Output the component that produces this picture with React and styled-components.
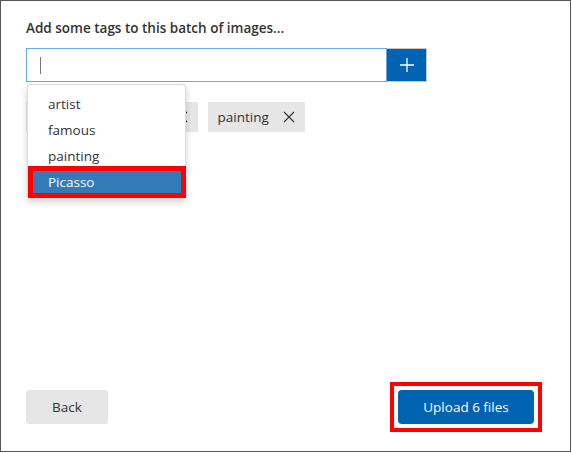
import React from 'react';
import styled, { createGlobalStyle } from 'styled-components';

const GlobalStyle = createGlobalStyle`
    html, body {
        margin: 0;
        padding: 0;
        background: #ffffff;
    }
    * {
        box-sizing: border-box;
    }
`

const Sframe = styled.div`
    width: 571px;
    height: 452px;
    border: 1px solid #555555;
    background: #ffffff;
    display: flex;
    flex-direction: column;
    padding: 17px 0 27px 25px;
    font-family: "Open Sans", "Noto Sans", sans-serif;
    color: #333333;
`

const Stitle = styled.div`
    font-size: 13.5px;
    font-weight: 600;
    line-height: 20px;
    color: #333333;
`

const SinputRow = styled.div`
    position: relative;
    display: flex;
    margin-top: 10px;
    height: 34px;
`

const SinputBox = styled.div`
    width: 361px;
    height: 34px;
    border: 1px solid #67a9e2;
    display: flex;
    align-items: center;
    padding-left: 13px;
`

const Scaret = styled.span`
    width: 1px;
    height: 17px;
    background: #777777;
`

const SplusButton = styled.button`
    width: 40px;
    height: 34px;
    border: 1px solid #c8c8c8;
    border-left: none;
    background: #0063b1;
    display: flex;
    align-items: center;
    justify-content: center;
    padding: 0;
`

const Sdropdown = styled.ul`
    position: absolute;
    top: 36px;
    left: 1px;
    width: 159px;
    margin: 0;
    padding: 6px 0 0 0;
    list-style: none;
    background: #ffffff;
    border: 1px solid #dcdcdc;
    border-radius: 3px;
    box-shadow: 0 3px 7px rgba(0, 0, 0, 0.18);
    z-index: 2;
`

const Sitem = styled.li`
    height: ${p => (p.$active ? '32px' : '26px')};
    margin: ${p => (p.$active ? '-3px -1px 0 0' : '0')};
    padding-left: ${p => (p.$active ? '15px' : '20px')};
    border: ${p => (p.$active ? '5px solid #ff0000' : 'none')};
    background: ${p => (p.$active ? '#337ab7' : 'transparent')};
    color: ${p => (p.$active ? '#ffffff' : '#333333')};
    font-size: 13.5px;
    display: flex;
    align-items: center;
`

const StagList = styled.div`
    display: flex;
    gap: 10px;
    margin-top: 20px;
`

const Stag = styled.div`
    height: 30px;
    background: #e6e6e6;
    display: flex;
    align-items: center;
    gap: 14px;
    padding: 0 10px;
    font-size: 13.5px;
    color: #333333;
`

const Sspacer = styled.div`
    flex: 1;
`

const Sfooter = styled.div`
    display: flex;
    justify-content: space-between;
    align-items: center;
    padding-right: 28px;
`

const Shighlight = styled.div`
    border: 4px solid #ff0000;
    padding: 4px;
    margin: -8px 0;
    display: flex;
`

const Sbutton = styled.button`
    height: 34px;
    width: ${p => p.$width}px;
    border: none;
    border-radius: ${p => (p.$primary ? '4px' : '3px')};
    background: ${p => (p.$primary ? '#0063b1' : '#e6e6e6')};
    color: ${p => (p.$primary ? '#ffffff' : '#333333')};
    font-family: "Open Sans", "Noto Sans", sans-serif;
    font-size: 13.5px;
    padding: 0;
`

function CloseIcon() {
    return (
        <svg width="12" height="12" viewBox="0 0 12 12">
            <path d="M1 1 L11 11 M11 1 L1 11" stroke="#333333" strokeWidth="1.1" fill="none" />
        </svg>
    );
}

function PlusIcon() {
    return (
        <svg width="14" height="14" viewBox="0 0 14 14">
            <path d="M7 0 V14 M0 7 H14" stroke="#ffffff" strokeWidth="1.3" fill="none" />
        </svg>
    );
}

const suggestions = ['artist', 'famous', 'painting', 'Picasso'];
const tags = ['Pablo Ruiz y Picasso', 'painting'];

function App() {
    return (
        <>
            <GlobalStyle />
            <Sframe>
                <Stitle>Add some tags to this batch of images...</Stitle>
                <SinputRow>
                    <SinputBox>
                        <Scaret />
                    </SinputBox>
                    <SplusButton aria-label="add">
                        <PlusIcon />
                    </SplusButton>
                    <Sdropdown>
                        {suggestions.map(s => (
                            <Sitem key={s} $active={s === 'Picasso'}>{s}</Sitem>
                        ))}
                    </Sdropdown>
                </SinputRow>
                <StagList>
                    {tags.map(t => (
                        <Stag key={t}>
                            {t}
                            <CloseIcon />
                        </Stag>
                    ))}
                </StagList>
                <Sspacer />
                <Sfooter>
                    <Sbutton $width={82}>Back</Sbutton>
                    <Shighlight>
                        <Sbutton $width={136} $primary>Upload 6 files</Sbutton>
                    </Shighlight>
                </Sfooter>
            </Sframe>
        </>
    );
}

export default App;
